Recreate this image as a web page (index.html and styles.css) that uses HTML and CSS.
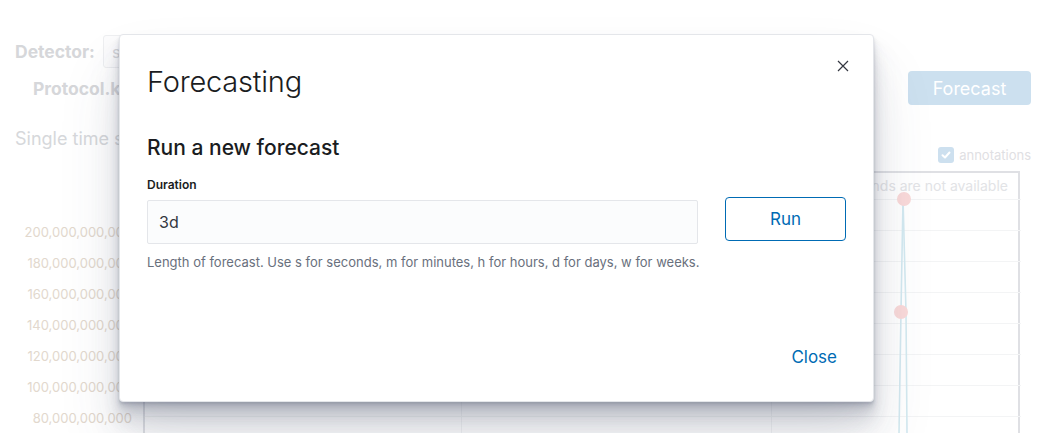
FILE: index.html
```html
<!DOCTYPE html>
<html>
<head>
<meta charset="utf-8">
<link rel="stylesheet" href="styles.css">
</head>
<body>
<div class="page">
  <div class="row detector-row">
    <span class="bold-label">Detector:</span>
    <div class="select">s</div>
  </div>
  <div class="row entity-row">
    <span class="bold-label entity">Protocol.keyword</span>
    <div class="spacer"></div>
    <div class="forecast-btn">Forecast</div>
  </div>
  <div class="row title-row">
    <span class="view-title">Single time series analysis</span>
    <div class="spacer"></div>
    <div class="annot">
      <span class="checkbox"><svg width="12" height="12" viewBox="0 0 12 12"><path d="M2.5 6.2 L5 8.5 L9.5 3.5" fill="none" stroke="#fff" stroke-width="2" stroke-linecap="round" stroke-linejoin="round"/></svg></span>
      <span class="annot-text">annotations</span>
    </div>
  </div>
  <div class="chart-area">
    <div class="axis">
      <span>200,000,000,000</span>
      <span>180,000,000,000</span>
      <span>160,000,000,000</span>
      <span>140,000,000,000</span>
      <span>120,000,000,000</span>
      <span>100,000,000,000</span>
      <span>80,000,000,000</span>
    </div>
    <div class="chart">
      <div class="chart-msg">Model bounds are not available</div>
      <svg class="plot" width="876" height="260" viewBox="0 0 876 260">
        <g stroke="#f3f4f5" stroke-width="1">
          <line x1="0" y1="26.5" x2="876" y2="26.5"/>
          <line x1="0" y1="57.5" x2="876" y2="57.5"/>
          <line x1="0" y1="88.5" x2="876" y2="88.5"/>
          <line x1="0" y1="119.5" x2="876" y2="119.5"/>
          <line x1="0" y1="150.5" x2="876" y2="150.5"/>
          <line x1="0" y1="181.5" x2="876" y2="181.5"/>
          <line x1="0" y1="212.5" x2="876" y2="212.5"/>
          <line x1="0" y1="243.5" x2="876" y2="243.5"/>
          <line x1="316.5" y1="26" x2="316.5" y2="260"/>
          <line x1="626.5" y1="26" x2="626.5" y2="260"/>
        </g>
        <g stroke="#d3e9f0" stroke-width="1.6" fill="none">
          <polyline points="758,26 756,139 754,260"/>
          <polyline points="758,26 761,139 762,260"/>
        </g>
        <circle cx="759" cy="26" r="7" fill="#f9d9d9"/>
        <circle cx="756" cy="139" r="7" fill="#f9d9d9"/>
      </svg>
    </div>
  </div>
</div>

<div class="modal">
  <div class="modal-header">
    <h1 class="modal-title">Forecasting</h1>
    <button class="close-x" aria-label="Close">
      <svg width="14" height="14" viewBox="0 0 14 14"><path d="M2 2 L12 12 M12 2 L2 12" stroke="#343741" stroke-width="1.2" fill="none"/></svg>
    </button>
  </div>
  <div class="modal-body">
    <h2 class="sub-title">Run a new forecast</h2>
    <div class="form-row">
      <div class="field">
        <label class="field-label">Duration</label>
        <div class="input">3d</div>
        <div class="help">Length of forecast. Use s for seconds, m for minutes, h for hours, d for days, w for weeks.</div>
      </div>
      <button class="run-btn">Run</button>
    </div>
  </div>
  <div class="modal-footer">
    <button class="close-link">Close</button>
  </div>
</div>
</body>
</html>
```

FILE: styles.css
```css
* { box-sizing: border-box; }
html, body { margin: 0; padding: 0; }
body {
  width: 1048px;
  height: 433px;
  overflow: hidden;
  background: #fff;
  font-family: Inter, "Noto Sans", sans-serif;
  position: relative;
}
.page {
  display: flex;
  flex-direction: column;
  padding: 35px 17px 0 15px;
}
.row { display: flex; align-items: center; }
.spacer { flex: 1; }
.bold-label {
  font-size: 17.5px;
  font-weight: 700;
  color: #d6d7da;
}
.detector-row { height: 33px; }
.select {
  margin-left: 8px;
  width: 300px;
  height: 33px;
  border: 1px solid #eeeff1;
  border-radius: 3px;
  padding: 6px 8px;
  font-size: 16px;
  color: #d6d7da;
  background: #fcfcfd;
}
.entity-row { margin-top: 3px; height: 34px; }
.entity { margin-left: 18px; }
.forecast-btn {
  width: 123px;
  height: 34px;
  border-radius: 4px;
  background: #cce0ef;
  color: #fff;
  font-size: 18px;
  display: flex;
  align-items: center;
  justify-content: center;
}
.title-row { margin-top: 15px; height: 34px; align-items: flex-start; }
.view-title { font-size: 18px; color: #d6d8db; margin-top: 8px; }
.annot { display: flex; align-items: center; margin-top: 27px; margin-right: 0; }
.checkbox {
  width: 16px; height: 16px;
  border-radius: 3px;
  background: #cde0ef;
  display: flex; align-items: center; justify-content: center;
}
.annot-text { margin-left: 5px; font-size: 13px; color: #dfe0e3; }
.chart-area { display: flex; margin-top: 0; }
.axis {
  width: 128px;
  padding-top: 63px;
  display: flex;
  flex-direction: column;
  align-items: flex-end;
  padding-right: 11px;
}
.axis span {
  height: 31px;
  line-height: 31px;
  font-size: 13px;
  color: #e2d8cd;
  white-space: nowrap;
}
.chart {
  position: relative;
  width: 877px;
  height: 270px;
  border: 2px solid #dfe0e4;
  border-bottom: none;
  margin-top: 17px;
}
.chart-msg {
  text-align: right;
  font-size: 14px;
  color: #e2e3e6;
  padding: 4px 10px 0 0;
  height: 23px;
}
.plot { position: absolute; left: 0; top: 0; }

.modal {
  position: absolute;
  left: 119px;
  top: 34px;
  width: 755px;
  height: 368px;
  background: #fff;
  border-radius: 4px;
  border: 1px solid #e4e6ea;
  box-shadow:
    0 40px 64px 0 rgba(65,78,101,0.12),
    0 24px 32px 0 rgba(65,78,101,0.12),
    0 16px 16px 0 rgba(65,78,101,0.12),
    0 8px 8px 0 rgba(65,78,101,0.12),
    0 4px 4px 0 rgba(65,78,101,0.12),
    0 2px 2px 0 rgba(65,78,101,0.12);
  display: flex;
  flex-direction: column;
  padding: 0 27px 0 27px;
}
.modal-header {
  display: flex;
  align-items: flex-start;
  justify-content: space-between;
  padding-top: 27px;
}
.modal-title {
  margin: 0;
  font-size: 29px;
  line-height: 40px;
  font-weight: 300;
  color: #1a1c21;
  letter-spacing: -0.2px;
}
.close-x {
  border: none;
  background: none;
  padding: 0;
  margin: -4px -5px 0 0;
  width: 16px; height: 16px;
  display: flex; align-items: center; justify-content: center;
  cursor: pointer;
}
.modal-body { padding-top: 32px; }
.sub-title {
  margin: 0;
  font-size: 21px;
  line-height: 28px;
  font-weight: 500;
  color: #1a1c21;
}
.form-row { display: flex; align-items: flex-start; margin-top: 14px; gap: 27px; }
.field { width: 551px; }
.field-label {
  display: block;
  font-size: 12px;
  font-weight: 600;
  color: #1a1c21;
  line-height: 18px;
}
.input {
  margin-top: 6px;
  height: 44px;
  background: #fbfcfd;
  border: 1px solid #e4e6ea;
  border-radius: 2px;
  padding: 0 11px;
  display: flex;
  align-items: center;
  font-size: 16px;
  color: #343741;
}
.help {
  margin-top: 9px;
  font-size: 13px;
  line-height: 18px;
  color: #69707d;
  white-space: nowrap;
}
.run-btn {
  margin-top: 21px;
  width: 123px;
  height: 44px;
  background: #fff;
  border: 1px solid #006bb4;
  border-radius: 4px;
  color: #006bb4;
  font-family: inherit;
  font-size: 17px;
}
.modal-footer {
  margin-top: auto;
  display: flex;
  justify-content: flex-end;
  padding-bottom: 32px;
}
.close-link {
  border: none;
  background: none;
  color: #006bb4;
  font-family: inherit;
  font-size: 17px;
  padding: 0 9px 0 0;
  line-height: 24px;
}
```
